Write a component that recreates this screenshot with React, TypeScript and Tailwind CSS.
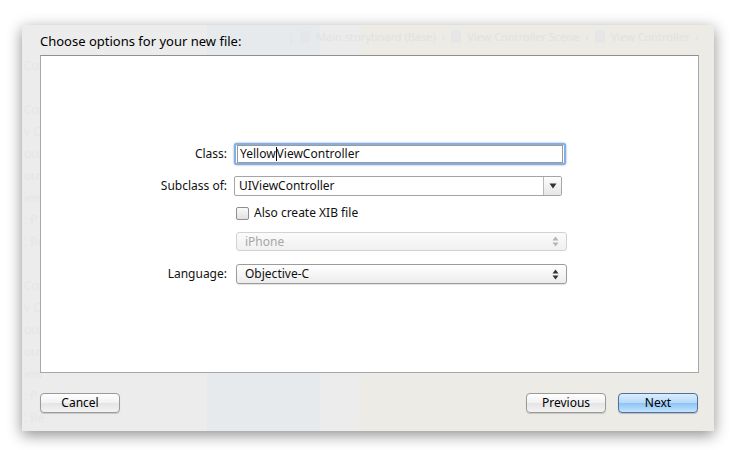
import React from "react";

const font = { fontFamily: '"Noto Sans", "Open Sans", sans-serif' };

function PopupArrows({ dim }: { dim?: boolean }) {
  const c = dim ? "#b5b5b5" : "#333";
  return (
    <svg width="7" height="11" viewBox="0 0 7 11">
      <path d="M3.5 0.5 L6.5 4.5 L0.5 4.5 Z" fill={c} />
      <path d="M3.5 10.5 L6.5 6.5 L0.5 6.5 Z" fill={c} />
    </svg>
  );
}

function GhostIcon() {
  return <span className="inline-block w-[10px] h-[12px] bg-[#e6e6e6] rounded-[1px]"></span>;
}

export default function App() {
  return (
    <div className="w-[739px] h-[450px] bg-white overflow-hidden" style={font}>
      <div className="ml-[22px] mt-[25px] w-[692px] h-[406px] relative shadow-[0_4px_14px_rgba(0,0,0,0.45)] bg-[linear-gradient(90deg,#ececec_0px,#ececec_185px,#e6eaec_185px,#e6eaec_298px,#ececec_298px,#ececec_338px,#ecebe5_338px)] flex flex-col">
        {/* ghost background text */}
        <div className="absolute left-[266px] top-[4px] text-[11px] text-[#e2e2e2] whitespace-nowrap flex items-center gap-[6px]">
          <span>|</span>
          <GhostIcon />
          <span>Main.storyboard (Base)</span>
          <span>›</span>
          <GhostIcon />
          <span>View Controller Scene</span>
          <span>›</span>
          <GhostIcon />
          <span>View Controller</span>
          <span>›</span>
        </div>
        <div className="absolute left-[2px] top-[30px] flex flex-col text-[12px] text-[#e6e6e6] leading-[22px] whitespace-nowrap">
          <span>Con</span>
          <span>&nbsp;</span>
          <span>Con</span>
          <span>v C</span>
          <span>oup</span>
          <span>ouv</span>
          <span>iew</span>
          <span>: P</span>
          <span>: Re</span>
          <span>&nbsp;</span>
          <span>Con</span>
          <span>v C</span>
          <span>oup</span>
          <span>ouv</span>
          <span>iew</span>
          <span>: P</span>
          <span>: Re</span>
        </div>

        <div className="relative h-[30px] pl-[18px] pt-[8px] text-[13px] leading-[16px] text-black">
          Choose options for your new file:
        </div>

        <div className="relative ml-[18px] w-[659px] h-[318px] bg-white border border-[#a8a8a8] border-t-[#8e8e8e] flex flex-col pt-[87px] text-[12px] text-[#111]">
          {/* Class */}
          <div className="flex items-center h-[22px]">
            <div className="w-[188px] text-right pr-[2px]">Class:</div>
            <div className="ml-[5px] w-[332px] h-[22px] rounded-[3px] border-[2px] border-[#84aee4] shadow-[0_0_2px_#6a9bd8] flex items-center bg-white">
              <div className="ml-[1px] h-[18px] w-[326px] border border-[#9a9a9a] flex items-center pl-[2px] leading-[14px]">
                <span>Yellow</span>
                <span className="inline-block w-[1px] h-[14px] bg-black"></span>
                <span>ViewController</span>
              </div>
            </div>
          </div>

          {/* Subclass */}
          <div className="flex items-center h-[19px] mt-[11px]">
            <div className="w-[188px] text-right pr-[2px]">Subclass of:</div>
            <div className="ml-[5px] w-[328px] h-[20px] border border-[#a5a5a5] rounded-[2px] flex bg-white">
              <div className="flex-1 flex items-center pl-[4px] leading-[14px]">UIViewController</div>
              <div className="w-[18px] border-l border-[#b8b8b8] bg-[linear-gradient(#fdfdfd,#e6e6e6)] flex items-center justify-center">
                <svg width="8" height="6" viewBox="0 0 8 6">
                  <path d="M0.5 0.5 L7.5 0.5 L4 5.5 Z" fill="#333" />
                </svg>
              </div>
            </div>
          </div>

          {/* Checkbox */}
          <div className="flex items-center h-[14px] mt-[11px]">
            <div className="w-[188px]"></div>
            <div className="ml-[7px] flex items-center">
              <div className="w-[13px] h-[13px] rounded-[2px] border border-[#8f8f8f] bg-[linear-gradient(#fafafa,#e2e2e2)]"></div>
              <span className="ml-[5px] leading-[14px]">Also create XIB file</span>
            </div>
          </div>

          {/* iPhone disabled */}
          <div className="flex items-center h-[19px] mt-[12px]">
            <div className="w-[188px]"></div>
            <div className="ml-[7px] w-[331px] h-[19px] rounded-[3px] border border-[#d2d2d2] bg-[linear-gradient(#fbfbfb,#f0f0f0)] flex items-center pl-[8px] pr-[7px] text-[#a6a6a6] leading-[14px]">
              <span className="flex-1">iPhone</span>
              <PopupArrows dim />
            </div>
          </div>

          {/* Language */}
          <div className="flex items-center h-[20px] mt-[13px]">
            <div className="w-[188px] text-right pr-[2px]">Language:</div>
            <div className="ml-[7px] w-[331px] h-[20px] rounded-[3px] border border-[#9c9c9c] bg-[linear-gradient(#ffffff,#ececec)] shadow-[0_1px_1px_rgba(0,0,0,0.12)] flex items-center pl-[8px] pr-[7px] leading-[14px]">
              <span className="flex-1">Objective-C</span>
              <PopupArrows />
            </div>
          </div>
        </div>

        <div className="relative flex items-center mt-[20px] pl-[18px] pr-[16px] text-[12px] text-black">
          <button className="w-[80px] h-[20px] rounded-[4px] border border-[#9a9a9a] bg-[linear-gradient(#ffffff,#f1f1f1_50%,#e4e4e4_51%,#f3f3f3)] shadow-[0_1px_1px_rgba(0,0,0,0.15)] leading-[14px]">
            Cancel
          </button>
          <div className="flex-1"></div>
          <button className="w-[80px] h-[20px] rounded-[4px] border border-[#9a9a9a] bg-[linear-gradient(#ffffff,#f1f1f1_50%,#e4e4e4_51%,#f3f3f3)] shadow-[0_1px_1px_rgba(0,0,0,0.15)] leading-[14px]">
            Previous
          </button>
          <button className="ml-[12px] w-[80px] h-[20px] rounded-[4px] border border-[#4f6f9f] bg-[linear-gradient(#dcedfd,#b6d9fb_50%,#8cc3f4_51%,#c3e4fd)] shadow-[0_1px_1px_rgba(0,0,0,0.2)] leading-[14px]">
            Next
          </button>
        </div>
      </div>
    </div>
  );
}
